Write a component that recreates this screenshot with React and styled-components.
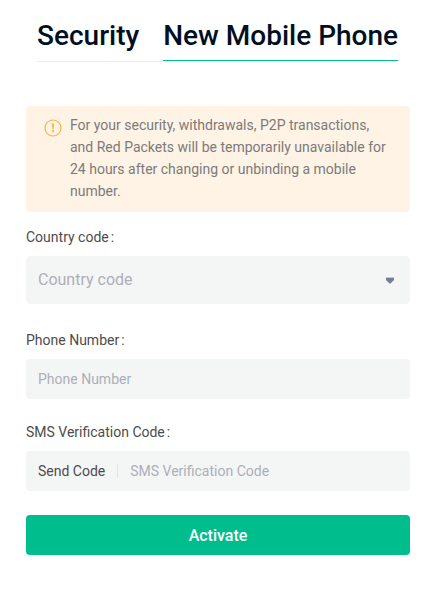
import React, { useState } from "react";
import styled, { createGlobalStyle } from "styled-components";

const GlobalStyle = createGlobalStyle`
  * {
    box-sizing: border-box;
  }
  body {
    margin: 0;
    background: #fff;
    font-family: Roboto, "Liberation Sans", sans-serif;
    font-size: 14px;
    color: #4c4c4c;
  }
  button, input, select {
    font-family: inherit;
  }
`;

const Page = styled.main`
  padding: 16px 32px 48px 26px;
`;

const Tabs = styled.nav`
  display: flex;
  align-items: flex-start;
  margin: 0 12px 44px 11px;
`;

const Tab = styled.a`
  padding-right: ${({ $active }) => ($active ? "0" : "24px")};
  padding-bottom: ${({ $active }) => ($active ? "4px" : "5px")};
  border-bottom: 1px solid ${({ $active }) => ($active ? "#00bd8e" : "#ebebed")};
  color: #000f21;
  font-size: 28px;
  font-weight: 500;
  line-height: 40px;
  text-decoration: none;
  white-space: nowrap;
`;

const Notice = styled.div`
  display: flex;
  gap: 8px;
  padding: 8px 18px 10px;
  margin-bottom: 15px;
  border-radius: 4px;
  background: #fff3e5;

  svg {
    flex: none;
    margin-top: 5px;
  }
  p {
    margin: 0;
    color: #7b7b7b;
    line-height: 22px;
  }
`;

const Field = styled.div`
  margin-bottom: ${({ $gap }) => $gap}px;
`;

const Label = styled.label`
  display: flex;
  gap: 2px;
  margin-bottom: 9px;
  line-height: 20px;

  &::after {
    content: ":";
  }
`;

const Box = styled.div`
  display: flex;
  align-items: center;
  height: ${({ $tall }) => ($tall ? "48px" : "40px")};
  padding: 0 12px;
  border-radius: 4px;
  background: #f4f6f6;
`;

const Input = styled.input`
  flex: 1;
  min-width: 0;
  padding: 0;
  border: 0;
  outline: 0;
  background: transparent;
  color: #4c4c4c;
  font-size: 14px;

  &::placeholder {
    color: #adafb6;
  }
`;

const Select = styled.select`
  flex: 1;
  min-width: 0;
  height: 100%;
  padding: 0 0 2px;
  border: 0;
  outline: 0;
  appearance: none;
  background: transparent;
  color: ${({ $empty }) => ($empty ? "#adafb6" : "#4c4c4c")};
  font-size: 16px;
`;

const Caret = styled.svg`
  flex: none;
  margin-right: 4px;
  pointer-events: none;
`;

const SendCode = styled.button`
  padding: 0 12px 0 0;
  margin-right: 12px;
  border: 0;
  border-right: 1px solid #e0e2e4;
  background: transparent;
  color: #4c4c4c;
  font-size: 14px;
  line-height: 14px;
  cursor: pointer;
`;

const Submit = styled.button`
  width: 100%;
  height: 40px;
  border: 0;
  border-radius: 4px;
  background: #00bd8e;
  color: #fff;
  font-size: 16px;
  font-weight: 500;
  cursor: pointer;
`;

export default function App() {
  const [country, setCountry] = useState("");
  const [phone, setPhone] = useState("");
  const [code, setCode] = useState("");

  return (
    <>
      <GlobalStyle />
      <Page>
        <Tabs>
          <Tab href="#security">Security</Tab>
          <Tab href="#phone" $active aria-current="page">
            New Mobile Phone
          </Tab>
        </Tabs>
        <Notice role="note">
          <svg width="18" height="18" viewBox="0 0 18 18" fill="none">
            <circle cx="9" cy="9" r="8" stroke="#f9b43f" strokeWidth="1.2" />
            <path d="M8 4.5h2l-.3 5.5H8.3z" fill="#f9b43f" />
            <circle cx="9" cy="12.2" r="1.1" fill="#f9b43f" />
          </svg>
          <p>
            For your security, withdrawals, P2P transactions, and Red Packets
            will be temporarily unavailable for 24 hours after changing or
            unbinding a mobile number.
          </p>
        </Notice>
        <form onSubmit={(e) => e.preventDefault()}>
          <Field $gap={26}>
            <Label htmlFor="country">Country code</Label>
            <Box $tall>
              <Select
                id="country"
                value={country}
                $empty={!country}
                onChange={(e) => setCountry(e.target.value)}
              >
                <option value="">Country code</option>
                <option value="44">+44</option>
                <option value="1">+1</option>
              </Select>
              <Caret width="8" height="7" viewBox="0 0 8 7">
                <path d="M0 1h8v2L4.5 6.5h-1L0 3z" fill="#748091" />
                <path d="M0 0h8v1H0z" fill="#c3c8d0" />
              </Caret>
            </Box>
          </Field>
          <Field $gap={23}>
            <Label htmlFor="phone">Phone Number</Label>
            <Box>
              <Input
                id="phone"
                type="tel"
                placeholder="Phone Number"
                value={phone}
                onChange={(e) => setPhone(e.target.value)}
              />
            </Box>
          </Field>
          <Field $gap={24}>
            <Label htmlFor="code">SMS Verification Code</Label>
            <Box>
              <SendCode type="button">Send Code</SendCode>
              <Input
                id="code"
                placeholder="SMS Verification Code"
                value={code}
                onChange={(e) => setCode(e.target.value)}
              />
            </Box>
          </Field>
          <Submit type="submit">Activate</Submit>
        </form>
      </Page>
    </>
  );
}
